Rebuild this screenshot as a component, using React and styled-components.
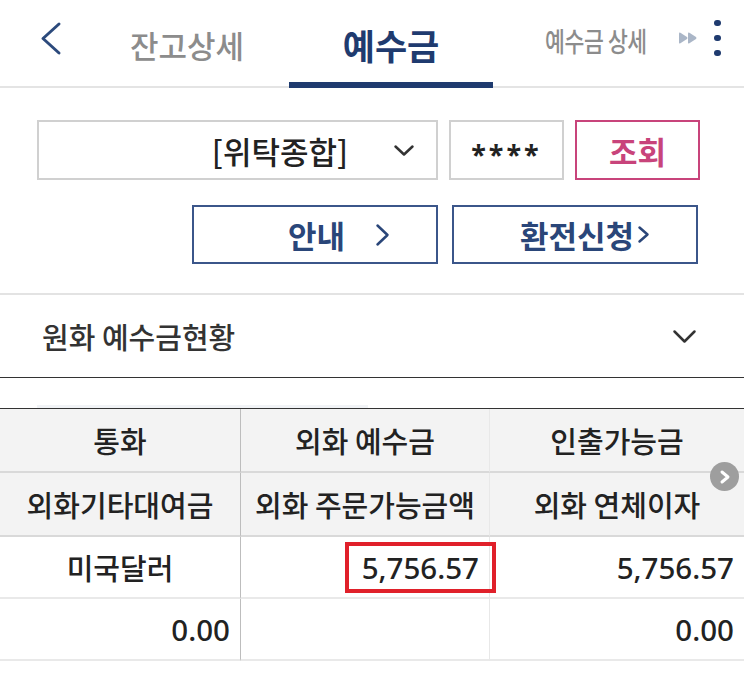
import React from "react";
import styled, { createGlobalStyle, css } from "styled-components";

const Global = createGlobalStyle`
  html, body { margin: 0; padding: 0; background: #fff; }
  body { font-family: "Noto Sans", "Noto Sans CJK KR", sans-serif; color: #222; }
  * { box-sizing: border-box; }
`;

const NAVY = "#1f3b6f";

const Page = styled.div`
  width: 744px;
  background: #fff;
`;

const TabBar = styled.div`
  display: flex;
  align-items: stretch;
  height: 88px;
  box-shadow: inset 0 -2px 0 #e4e4e4;
`;

const BackBtn = styled.div`
  width: 85px;
  display: flex;
  align-items: center;
  padding-left: 40px;
  padding-bottom: 11px;
`;

const Tab = styled.div`
  width: 204px;
  display: flex;
  align-items: center;
  justify-content: center;
  padding-top: 6px;
  border-bottom: 6px solid transparent;
  font-family: "Noto Sans CJK KR", sans-serif;
  font-size: 31px;
  font-weight: 500;
  color: #8c8c8c;
  ${(p) =>
    p.$active &&
    css`
      border-bottom-color: ${NAVY};
      font-size: 35px;
      font-weight: 700;
      color: ${NAVY};
    `}
`;

const SubTab = styled.div`
  width: 185px;
  display: flex;
  align-items: center;
  padding-left: 52px;
  padding-bottom: 8px;
  font-family: "Noto Sans CJK KR", sans-serif;
  font-size: 27px;
  font-weight: 500;
  color: #8c8c8c;
  white-space: nowrap;
`;

const Condensed = styled.span`
  display: inline-block;
  transform: scaleX(0.8);
  transform-origin: left center;
  letter-spacing: -0.5px;
`;

const TailIcons = styled.div`
  display: flex;
  align-items: center;
  padding-bottom: 12px;
`;

const Kebab = styled.div`
  display: flex;
  flex-direction: column;
  gap: 8.5px;
  margin-left: 16px;
`;

const Dot = styled.span`
  width: 6.5px;
  height: 6.5px;
  border-radius: 50%;
  background: ${NAVY};
`;

const Form = styled.div`
  padding: 32px 43px 29px 37px;
`;

const Row = styled.div`
  display: flex;
  gap: ${(p) => p.$gap}px;
  justify-content: ${(p) => (p.$end ? "flex-end" : "flex-start")};
  margin-top: ${(p) => p.$top || 0}px;
  margin-right: ${(p) => p.$right || 0}px;
`;

const Select = styled.div`
  width: 401px;
  height: 60px;
  border: 2px solid #d0d0d0;
  display: flex;
  align-items: center;
  justify-content: flex-end;
  gap: 45px;
  padding-right: 21px;
  font-family: "Noto Sans CJK KR", sans-serif;
  font-size: 31px;
  font-weight: 500;
  color: #222;
`;

const Password = styled.div`
  width: 115px;
  height: 60px;
  border: 2px solid #d0d0d0;
  display: flex;
  align-items: center;
  justify-content: center;
  padding-top: 8px;
  font-size: 27px;
  font-weight: 700;
  letter-spacing: 3px;
  color: #222;
`;

const QueryBtn = styled.div`
  width: 125px;
  height: 60px;
  border: 2px solid #c8447b;
  display: flex;
  align-items: center;
  justify-content: center;
  font-family: "Noto Sans CJK KR", sans-serif;
  font-size: 31px;
  font-weight: 700;
  color: #c8447b;
`;

const NavBtn = styled.div`
  width: 246px;
  height: 59px;
  border: 2px solid #3b568a;
  display: flex;
  align-items: center;
  justify-content: flex-end;
  gap: ${(p) => p.$gap}px;
  padding-right: 46px;
  font-family: "Noto Sans CJK KR", sans-serif;
  font-size: 31px;
  font-weight: 700;
  color: #2a4679;
`;

const Section = styled.div`
  height: 85px;
  border-top: 2px solid #e3e3e3;
  border-bottom: 1.5px solid #333;
  display: flex;
  align-items: center;
  justify-content: space-between;
  padding: 0 47px 0 42px;
  font-family: "Noto Sans CJK KR", sans-serif;
  font-size: 29px;
  font-weight: 500;
  color: #333;
`;

const Spacer = styled.div`
  height: 30px;
  display: flex;
  align-items: flex-end;
  padding-left: 37px;
`;

const Faint = styled.div`
  width: 331px;
  height: 3px;
  background: #f1f3f6;
`;

const TableWrap = styled.div`
  position: relative;
  border-top: 1.5px solid #333;
`;

const Grid = styled.div`
  display: grid;
  grid-template-columns: 241px 249px 1fr;
`;

const Cell = styled.div`
  height: ${(p) => (p.$head ? 64 : 62)}px;
  display: flex;
  align-items: center;
  justify-content: ${(p) => (p.$num ? "flex-end" : "center")};
  padding-right: ${(p) => (p.$num ? 10 : 0)}px;
  background: ${(p) => (p.$head ? "#f3f3f3" : "#fff")};
  border-bottom: 2px solid ${(p) => (p.$head ? "#d9d9d9" : "#e9e9e9")};
  border-right: ${(p) =>
    p.$col === 0 ? "1.5px solid #bdbdbd" : p.$col === 1 ? "1.5px solid #e8e8e8" : "none"};
  font-family: ${(p) =>
    p.$num ? '"Noto Sans", "Noto Sans CJK KR", sans-serif' : '"Noto Sans CJK KR", sans-serif'};
  font-size: ${(p) => (p.$num ? 29.5 : 29)}px;
  font-weight: 500;
  color: #222;
  white-space: nowrap;
`;

const Marked = styled.span`
  position: relative;
  z-index: 1;
  display: inline-block;
  margin-right: -17px;
  padding: 0 13px;
  line-height: 43px;
  border: 4px solid #e0202a;
`;

const Circle = styled.div`
  position: absolute;
  right: 5px;
  top: 53px;
  width: 29px;
  height: 29px;
  border-radius: 50%;
  background: #9e9e9e;
  display: flex;
  align-items: center;
  justify-content: center;
`;

const Chevron = ({ w, h, sw = 2.5, color = "#333", dir = "down" }) => {
  const d =
    dir === "down"
      ? `M${sw} ${sw} L${w / 2} ${h - sw} L${w - sw} ${sw}`
      : dir === "right"
      ? `M${sw} ${sw} L${w - sw} ${h / 2} L${sw} ${h - sw}`
      : `M${w - sw} ${sw} L${sw} ${h / 2} L${w - sw} ${h - sw}`;
  return (
    <svg width={w} height={h} viewBox={`0 0 ${w} ${h}`}>
      <path d={d} fill="none" stroke={color} strokeWidth={sw} strokeLinecap="round" strokeLinejoin="round" />
    </svg>
  );
};

const headers1 = ["통화", "외화 예수금", "인출가능금"];
const headers2 = ["외화기타대여금", "외화 주문가능금액", "외화 연체이자"];

export default function App() {
  return (
    <Page>
      <Global />
      <TabBar>
        <BackBtn>
          <Chevron w={22} h={35} sw={3} color="#2c4a7c" dir="left" />
        </BackBtn>
        <Tab>잔고상세</Tab>
        <Tab $active>예수금</Tab>
        <SubTab>
          <Condensed>예수금 상세</Condensed>
        </SubTab>
        <TailIcons>
          <svg width="20" height="12" viewBox="0 0 20 12">
            <path d="M1 1.5 Q1 0 2.4 0.8 L9 5 Q10 6 9 7 L2.4 11.2 Q1 12 1 10.5 Z" fill="#aab6c7" />
            <path d="M10 1.5 Q10 0 11.4 0.8 L18 5 Q19 6 18 7 L11.4 11.2 Q10 12 10 10.5 Z" fill="#aab6c7" />
          </svg>
          <Kebab>
            <Dot />
            <Dot />
            <Dot />
          </Kebab>
        </TailIcons>
      </TabBar>

      <Form>
        <Row $gap={11}>
          <Select>
            <span>[위탁종합]</span>
            <Chevron w={22} h={13} sw={2.5} color="#333" />
          </Select>
          <Password>****</Password>
          <QueryBtn>조회</QueryBtn>
        </Row>
        <Row $gap={14} $end $top={25} $right={3}>
          <NavBtn $gap={30}>
            <span>안내</span>
            <Chevron w={15} h={24} sw={2.5} color="#2a4679" dir="right" />
          </NavBtn>
          <NavBtn $gap={3}>
            <span>환전신청</span>
            <Chevron w={13} h={19} sw={2.5} color="#2a4679" dir="right" />
          </NavBtn>
        </Row>
      </Form>

      <Section>
        <span>원화 예수금현황</span>
        <Chevron w={25} h={15} sw={2.5} color="#333" />
      </Section>

      <Spacer>
        <Faint />
      </Spacer>

      <TableWrap>
        <Grid>
          {headers1.map((h, i) => (
            <Cell key={"a" + i} $head $col={i}>
              {h}
            </Cell>
          ))}
          {headers2.map((h, i) => (
            <Cell key={"b" + i} $head $col={i}>
              {h}
            </Cell>
          ))}
          <Cell $col={0}>미국달러</Cell>
          <Cell $col={1} $num>
            <Marked>5,756.57</Marked>
          </Cell>
          <Cell $col={2} $num>
            5,756.57
          </Cell>
          <Cell $col={0} $num>
            0.00
          </Cell>
          <Cell $col={1} $num></Cell>
          <Cell $col={2} $num>
            0.00
          </Cell>
        </Grid>
        <Circle>
          <Chevron w={12} h={16} sw={3} color="#fff" dir="right" />
        </Circle>
      </TableWrap>
    </Page>
  );
}
